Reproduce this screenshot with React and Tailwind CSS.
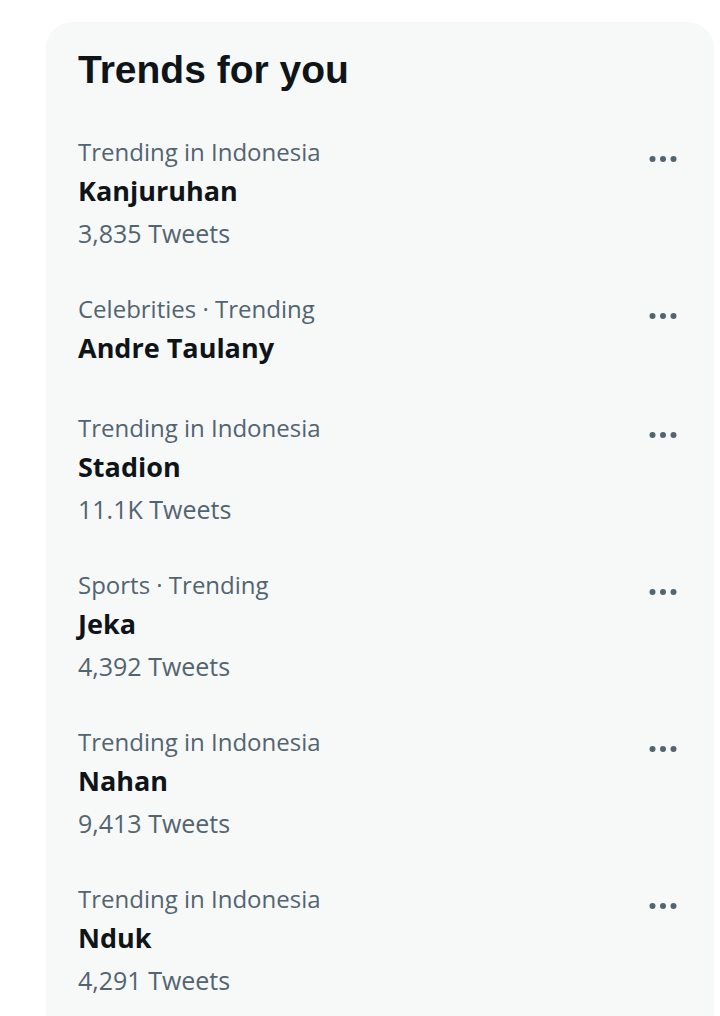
import React from "react";

const trends = [
  { category: "Trending in Indonesia", name: "Kanjuruhan", count: "3,835 Tweets" },
  { category: "Celebrities · Trending", name: "Andre Taulany" },
  { category: "Trending in Indonesia", name: "Stadion", count: "11.1K Tweets" },
  { category: "Sports · Trending", name: "Jeka", count: "4,392 Tweets" },
  { category: "Trending in Indonesia", name: "Nahan", count: "9,413 Tweets" },
  { category: "Trending in Indonesia", name: "Nduk", count: "4,291 Tweets" },
];

function MoreDots() {
  return (
    <svg width="28" height="8" viewBox="0 0 28 8" className="text-[#536471]">
      <circle cx="3.5" cy="4" r="3" fill="currentColor" />
      <circle cx="14" cy="4" r="3" fill="currentColor" />
      <circle cx="24.5" cy="4" r="3" fill="currentColor" />
    </svg>
  );
}

export default function App() {
  return (
    <div className="w-[720px] h-[1016px] overflow-hidden bg-white pt-[22px] pl-[46px] pr-[6px] font-['Open_Sans','Noto_Sans',sans-serif]">
      <div className="bg-[#f7f9f9] rounded-[26px] pt-[24px] pb-[40px]">
        {/* Header */}
        <h2 className="px-[32px] h-[48px] leading-[48px] text-[39px] font-bold text-[#0f1419] font-['Liberation_Sans',sans-serif]">
          Trends for you
        </h2>

        {/* Trend rows */}
        <div className="pt-[39px]">
          {trends.map((t, i) => (
            <div key={i} className="flex justify-between pl-[32px] pr-[37px] pb-[41px]">
              <div className="flex flex-col">
                <span className="h-[38px] leading-[38px] text-[24px] text-[#536471]">{t.category}</span>
                <span className="h-[40px] leading-[40px] text-[27px] font-bold text-[#0f1419]">{t.name}</span>
                {t.count && (
                  <span className="h-[38px] leading-[44px] text-[25px] text-[#536471]">{t.count}</span>
                )}
              </div>
              <div className="pt-[22px]">
                <MoreDots />
              </div>
            </div>
          ))}
        </div>
      </div>
    </div>
  );
}
